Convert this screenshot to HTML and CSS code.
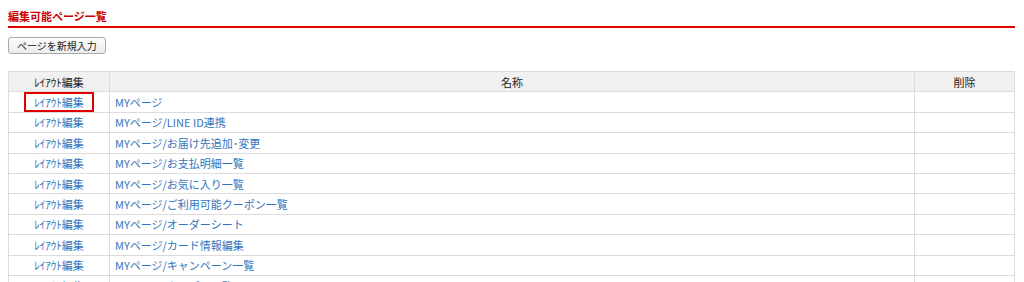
FILE: index.html
```html
<!DOCTYPE html>
<html lang="ja">
<head>
    <meta charset="UTF-8" />
    <title>編集可能ページ一覧</title>
    <link rel="stylesheet" href="styles.css">
</head>
<body>
    <!-- PAGE TITLE -->
    <h2 class="page-title">編集可能ページ一覧</h2>

    <div class="action-cont">
        <button class="new-btn">ページを新規入力</button>
    </div>

    <!-- PAGE LIST -->
    <table class="page-table">
        <thead>
            <tr>
                <th class="col-layout">ﾚｲｱｳﾄ編集</th>
                <th class="col-name">名称</th>
                <th class="col-delete">削除</th>
            </tr>
        </thead>
        <tbody>
            <tr>
                <td class="col-layout"><a href="#" class="layout-link marked">ﾚｲｱｳﾄ編集</a></td>
                <td><a href="#">MYページ</a></td>
                <td></td>
            </tr>
            <tr>
                <td class="col-layout"><a href="#" class="layout-link">ﾚｲｱｳﾄ編集</a></td>
                <td><a href="#">MYページ/LINE ID連携</a></td>
                <td></td>
            </tr>
            <tr>
                <td class="col-layout"><a href="#" class="layout-link">ﾚｲｱｳﾄ編集</a></td>
                <td><a href="#">MYページ/お届け先追加･変更</a></td>
                <td></td>
            </tr>
            <tr>
                <td class="col-layout"><a href="#" class="layout-link">ﾚｲｱｳﾄ編集</a></td>
                <td><a href="#">MYページ/お支払明細一覧</a></td>
                <td></td>
            </tr>
            <tr>
                <td class="col-layout"><a href="#" class="layout-link">ﾚｲｱｳﾄ編集</a></td>
                <td><a href="#">MYページ/お気に入り一覧</a></td>
                <td></td>
            </tr>
            <tr>
                <td class="col-layout"><a href="#" class="layout-link">ﾚｲｱｳﾄ編集</a></td>
                <td><a href="#">MYページ/ご利用可能クーポン一覧</a></td>
                <td></td>
            </tr>
            <tr>
                <td class="col-layout"><a href="#" class="layout-link">ﾚｲｱｳﾄ編集</a></td>
                <td><a href="#">MYページ/オーダーシート</a></td>
                <td></td>
            </tr>
            <tr>
                <td class="col-layout"><a href="#" class="layout-link">ﾚｲｱｳﾄ編集</a></td>
                <td><a href="#">MYページ/カード情報編集</a></td>
                <td></td>
            </tr>
            <tr>
                <td class="col-layout"><a href="#" class="layout-link">ﾚｲｱｳﾄ編集</a></td>
                <td><a href="#">MYページ/キャンペーン一覧</a></td>
                <td></td>
            </tr>
            <tr>
                <td class="col-layout"><a href="#" class="layout-link">ﾚｲｱｳﾄ編集</a></td>
                <td><a href="#">MYページ/クーポン一覧</a></td>
                <td></td>
            </tr>
        </tbody>
    </table>
</body>
</html>
```

FILE: styles.css
```css
* {
box-sizing: border-box;
}

body {
margin: 0;
padding: 8px 9px 0 8px;
font-family: "Noto Sans CJK JP", "Noto Sans", sans-serif;
font-size: 11px;
color: #333;
background-color: #fff;
}

.page-title {
margin: 0;
padding: 1px 0 3px 0;
font-size: 11px;
font-weight: bold;
color: #cc0000;
border-bottom: 2px solid #dd0000;
line-height: 14px;
}

.action-cont {
padding: 9px 0 17px 0;
line-height: 0;
}

.new-btn {
height: 17px;
padding: 0 8px;
font-family: inherit;
font-size: 10px;
line-height: 15px;
color: #222;
background: linear-gradient(#fdfdfd, #ececec);
border: 1px solid #a9a9a9;
border-radius: 3px;
}

.page-table {
width: 100%;
border-collapse: collapse;
border: 1px solid #dcdcdc;
}

.page-table th,
.page-table td {
border: 1px solid #dcdcdc;
height: 20.4px;
padding: 0 5px;
line-height: 18px;
}

.page-table th {
background-color: #f0f0f0;
font-weight: normal;
color: #222;
}

.col-layout {
width: 101px;
text-align: center;
}

.col-delete {
width: 100px;
}

.page-table a {
color: #3275bd;
text-decoration: none;
}

.marked {
position: relative;
}

.marked::after {
content: "";
position: absolute;
left: -10px;
right: -10px;
top: -2px;
bottom: -2px;
border: 2px solid #e00000;
}
```
